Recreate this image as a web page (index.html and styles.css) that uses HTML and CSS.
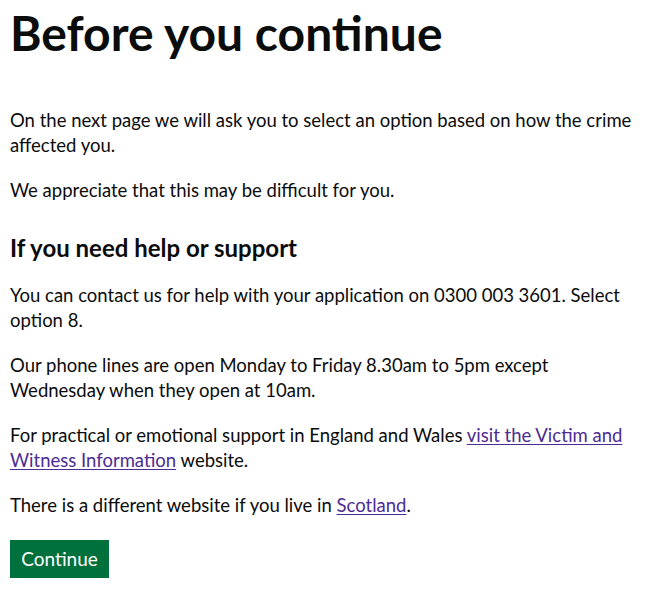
FILE: index.html
```html
<!DOCTYPE html>
<html lang="en">
<head>
<meta charset="utf-8">
<title>Before you continue</title>
<link rel="stylesheet" href="styles.css">
</head>
<body>
<main class="page">
  <h1 class="heading-xl">Before you continue</h1>
  <p class="body">On the next page we will ask you to select an option based on how the crime affected you.</p>
  <p class="body">We appreciate that this may be difficult for you.</p>
  <h2 class="heading-m">If you need help or support</h2>
  <p class="body">You can contact us for help with your application on 0300 003 3601. Select option 8.</p>
  <p class="body">Our phone lines are open Monday to Friday 8.30am to 5pm except Wednesday when they open at 10am.</p>
  <p class="body">For practical or emotional support in England and Wales <a class="link" href="#">visit the Victim and Witness Information</a> website.</p>
  <p class="body">There is a different website if you live in <a class="link" href="#">Scotland</a>.</p>
  <button class="button" type="button">Continue</button>
</main>
</body>
</html>
```

FILE: styles.css
```css
html, body {
  margin: 0;
  padding: 0;
  background: #ffffff;
}

body {
  font-family: Lato, "Noto Sans", "Liberation Sans", sans-serif;
  color: #0b0c0c;
}

.page {
  padding: 8px 10px 0 10px;
  width: 650px;
  box-sizing: border-box;
}

.heading-xl {
  font-size: 48px;
  line-height: 50px;
  font-weight: 700;
  margin: 0 0 50px 0;
}

.heading-m {
  font-size: 24px;
  line-height: 30px;
  font-weight: 700;
  margin: 30px 0 20px 0;
}

.body {
  font-size: 18.5px;
  line-height: 25px;
  margin: 0 0 20px 0;
}

.link {
  color: #4c2c92;
  text-decoration: underline;
  text-decoration-thickness: 1px;
  text-underline-offset: 2px;
}

.button {
  display: block;
  margin: 22px 0 0 0;
  width: 99px;
  height: 38px;
  padding: 0;
  border: 0;
  background: #00703c;
  box-shadow: 0 2px 0 #002d18;
  color: #ffffff;
  font-family: inherit;
  font-size: 19px;
  line-height: 38px;
  text-align: center;
  cursor: pointer;
}
```
